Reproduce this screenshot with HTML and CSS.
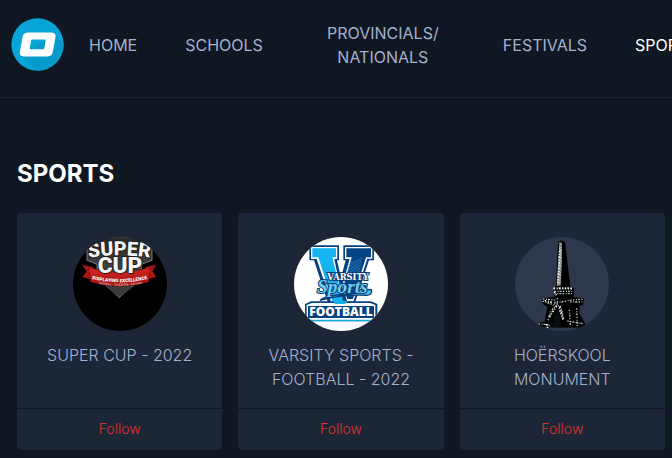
FILE: index.html
```html
<!DOCTYPE html>
<html lang="en">
<head>
<meta charset="utf-8">
<meta name="viewport" content="width=device-width, initial-scale=1">
<title>Sports</title>
<link rel="stylesheet" href="styles.css">
</head>
<body>
<header class="site-header">
  <a class="logo" href="#" aria-label="Home page">
    <svg viewBox="33 55 156 156" aria-hidden="true">
      <defs><clipPath id="disc"><circle cx="111" cy="133" r="77"/></clipPath></defs>
      <circle cx="111" cy="133" r="77" fill="#08a5d8"/>
      <g clip-path="url(#disc)"><path d="M61 161L162 104L220 162V230H130Z" fill="#079bcb"/></g>
      <path fill="#fff" fill-rule="evenodd" d="M82 98H152Q166 99 164 112L156 155Q154 167 141 168H70Q57 167 59 154L67 110Q69 99 82 98ZM96 118Q93 118 92 121L88 144Q88 147 91 147H127Q130 147 131 144L135 121Q135 118 132 118Z"/>
    </svg>
  </a>
  <nav class="nav" aria-label="Main">
    <a href="#">HOME</a>
    <a href="#">SCHOOLS</a>
    <a class="two-line" href="#">PROVINCIALS/ NATIONALS</a>
    <a href="#">FESTIVALS</a>
    <a class="active" href="#" aria-current="page">SPORTS</a>
  </nav>
</header>
<main class="content">
  <h1>SPORTS</h1>
  <div class="cards">
    <article class="card">
      <div class="card-body">
        <svg class="avatar" viewBox="24 21 282 282" aria-hidden="true">
          <defs>
            <linearGradient id="steel" x2="0" y2="1"><stop stop-color="#292a2c"/><stop offset="1" stop-color="#555759"/></linearGradient>
            <linearGradient id="ribbon" x2="0" y2="1"><stop stop-color="#d52821"/><stop offset="1" stop-color="#9f1513"/></linearGradient>
            <path id="arch" d="M66 84Q162 68 260 84"/>
            <path id="curve" d="M77 146Q163 167 251 146"/>
            <path id="curve-small" d="M90 159Q163 175 242 159"/>
          </defs>
          <rect x="24" y="21" width="282" height="282" fill="#000"/>
          <path d="M66 45Q162 -5 261 45V91L229 103V140L163 203L96 140V103L66 91Z" fill="url(#steel)" stroke="#77797b" stroke-width="3"/>
          <path d="M120 168L163 201L209 168Z" fill="#3b3c3e"/>
          <path d="M51 104L84 111L82 149L52 141L65 124Z" fill="#a91815"/>
          <path d="M274 104L242 111L244 149L274 141L262 124Z" fill="#a91815"/>
          <path d="M71 112Q163 143 255 112L251 155Q163 182 76 155Z" fill="url(#ribbon)" stroke="#651010" stroke-width="2"/>
          <g class="cup-text">
            <text class="super"><textPath href="#arch" startOffset="50%">SUPER</textPath></text>
            <text class="cup" x="165" y="128">CUP</text>
          </g>
          <text class="tagline"><textPath href="#curve" startOffset="50%">DISPLAYING EXCELLENCE</textPath></text>
          <text class="subline"><textPath href="#curve-small" startOffset="50%">FOOTBALL • EDUCATION • CULTURE</textPath></text>
        </svg>
        <h2>SUPER CUP - 2022</h2>
      </div>
      <button class="follow" type="button">Follow</button>
    </article>
    <article class="card">
      <div class="card-body">
        <svg class="avatar" viewBox="24 21 282 282" aria-hidden="true">
          <defs>
            <pattern id="dots" width="7" height="7" patternUnits="userSpaceOnUse" patternTransform="rotate(-35)"><path d="M0 3H5" stroke="#42a8e4" stroke-width="2"/></pattern>
          </defs>
          <rect x="24" y="21" width="282" height="282" fill="#fff"/>
          <path d="M70 46H159V91H153L165 143L179 91H172V46H264V91H249L205 225H128L84 91H70Z" fill="#064080"/>
          <path d="M75 51H154V87H145L169 203L154 227H139L92 87H75Z" fill="#fff"/>
          <path d="M79 55H150V82H139L171 213L185 220H141L97 82H79Z" fill="#16b5f2"/>
          <path d="M177 51H259V86H244L202 215H184L168 169L191 87H177Z" fill="#fff"/>
          <path d="M181 55H255V82H240L201 207H184L172 171L197 82H181Z" fill="#064487"/>
          <path d="M187 98L228 84L220 132H179Z" fill="url(#dots)"/>
          <path d="M57 270V222L75 214H255L274 222V274H57Z" fill="#0b4383"/>
          <path d="M62 274V225L78 219H252L268 225V274Z" fill="#fff"/>
          <path d="M66 264V228H264V264Z" fill="#07417f"/>
          <path d="M66 269H264V274H66Z" fill="#16a7df"/>
          <path d="M141 212H184L178 222H147Z" fill="#18aee9"/>
          <path d="M102 211Q171 192 243 196Q260 194 256 179L242 178Q217 193 155 195Q117 198 102 211Z" fill="#4fc0ec" stroke="#073e7a" stroke-width="4"/>
          <text class="script" x="169" y="190">Sports</text>
          <text class="varsity" x="186" y="149">VARSITY</text>
          <text class="football" x="165" y="259">FOOTBALL</text>
        </svg>
        <h2>VARSITY SPORTS - FOOTBALL - 2022</h2>
      </div>
      <button class="follow" type="button">Follow</button>
    </article>
    <article class="card">
      <div class="card-body">
        <svg class="avatar" viewBox="24 21 282 282" aria-hidden="true">
          <rect x="24" y="21" width="282" height="282" fill="#2d384d"/>
          <path d="M153 38L163 31L174 37L190 169L201 175L199 201L232 205L228 225L218 229L217 249L235 282L230 293L92 292L96 278L113 275L121 231L107 222L106 205L142 201L139 176L147 169Z" fill="#000"/>
          <path d="M157 39L164 36L165 100L161 167H149Z" fill="#777a7a"/>
          <g class="stone">
            <path d="M159 38L152 166M163 42L158 165"/>
            <path d="M140 174H199M143 184H196M142 191H195"/>
            <path d="M108 207L143 210L144 220L187 211L230 207M107 214L142 225M151 204V224M190 216H226"/>
            <path d="M149 225Q130 238 122 275M154 226Q158 248 169 270M160 227L171 266"/>
            <path d="M95 282L128 284L121 293M187 239L190 287M209 235L211 288M181 273L228 281"/>
          </g>
          <g class="highlights"><path d="M159 62L153 164M139 176H199M142 184L149 197M113 212L139 218M149 228L126 263M158 230L168 267M118 282L121 294"/></g>
          <path d="M134 292Q141 254 151 244Q163 257 164 292Z" fill="#080a0e"/>
        </svg>
        <h2>HOËRSKOOL MONUMENT</h2>
      </div>
      <button class="follow" type="button">Follow</button>
    </article>
  </div>
</main>
</body>
</html>
```
FILE: styles.css
```css
* { box-sizing: border-box; }

body {
  margin: 0;
  background: #0f1722;
  color: #a3b1cf;
  font-family: Inter, "Liberation Sans", sans-serif;
  font-size: 16px;
  line-height: 24px;
  overflow-x: hidden;
}

.site-header {
  display: flex;
  align-items: center;
  gap: 25px;
  padding: 18px 0 26px 11px;
  border-bottom: 1px solid #1b2833;
  overflow: hidden;
}

.logo { flex: none; }
.logo svg { display: block; width: 53px; height: 53px; }

.nav {
  display: flex;
  align-items: center;
  gap: 48px;
}

.nav a {
  flex: none;
  color: inherit;
  text-align: center;
  text-decoration: none;
}

.nav .two-line { width: 144px; }
.nav .active { color: #fff; }

.content { padding: 60px 7px 8px 17px; }

h1 {
  margin: 0 0 23px;
  color: #fff;
  font-size: 24px;
  font-weight: 700;
  line-height: 32px;
}

.cards {
  display: grid;
  grid-template-columns: repeat(3, 1fr);
  gap: 16px;
}

.card {
  display: flex;
  flex-direction: column;
  background: #1d2636;
  border-radius: 4px;
  overflow: hidden;
}

.card-body {
  flex: 1;
  padding: 24px 24px 17px;
  text-align: center;
}

.avatar {
  display: block;
  width: 94px;
  height: 94px;
  margin: 0 auto 12px;
  border-radius: 50%;
}

h2 {
  margin: 0;
  font-size: 16px;
  font-weight: 300;
  line-height: 24px;
}

.follow {
  padding: 9px 0 11px;
  border: 0;
  border-top: 1px solid #0f1722;
  background: none;
  color: #e0322d;
  font: 300 14px/21px Inter, "Liberation Sans", sans-serif;
  cursor: pointer;
}

.avatar text { text-anchor: middle; }

.cup-text {
  fill: #f5f5f5;
  stroke: #171717;
  stroke-width: 5px;
  paint-order: stroke;
  font-family: Roboto, sans-serif;
  font-weight: 900;
}

.super { font-size: 59px; }
.cup { font-size: 68px; }

.tagline {
  fill: #fff;
  font: 900 14px Roboto, sans-serif;
}

.subline {
  fill: #e6b2ac;
  font: 700 8px Roboto, sans-serif;
}

.varsity {
  fill: #fff;
  stroke: #073e7a;
  stroke-width: 6px;
  paint-order: stroke;
  font: 700 25px "DejaVu Serif", serif;
}

.script {
  fill: #6fcdf2;
  stroke: #073e7a;
  stroke-width: 6px;
  paint-order: stroke;
  font: italic 700 58px "Liberation Serif", serif;
}

.football {
  fill: #fff;
  font: 800 36px "Open Sans", sans-serif;
}

.stone {
  fill: none;
  stroke: #b9bec2;
  stroke-width: 4px;
  stroke-dasharray: 4 5 3 3 6 4;
}

.highlights {
  fill: none;
  stroke: #f4f4f0;
  stroke-width: 5px;
  stroke-dasharray: 5 5 3 4;
}
```
